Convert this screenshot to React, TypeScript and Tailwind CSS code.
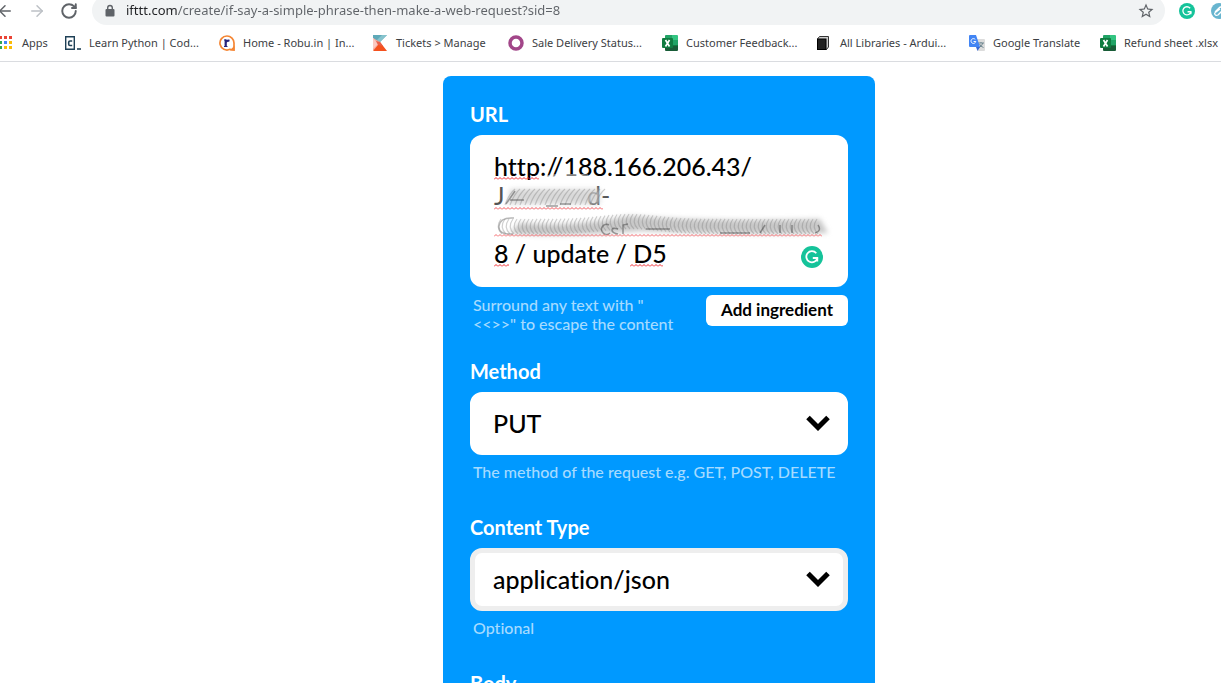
import { ReactNode } from "react";
import { ArrowLeft, ArrowRight, RotateCw } from "lucide-react";

function GrammarlyIcon({ className }: { className: string }) {
  return (
    <svg viewBox="0 0 22 22" className={className} aria-hidden="true">
      <circle cx="11" cy="11" r="11" fill="#15c39a" />
      <path d="M15.3 7.2A5.6 5.6 0 1 0 16.4 12" fill="none" stroke="#fff" strokeWidth="1.8" />
      <path d="M11.8 12h4.5v3.6" fill="none" stroke="#fff" strokeWidth="1.8" />
    </svg>
  );
}

function LockIcon() {
  return (
    <svg viewBox="0 0 12 14" className="h-3.5 w-3 shrink-0" aria-hidden="true">
      <rect x="1.500" y="5" width="9" height="7.500" rx="1" fill="#5f6368" />
      <path d="M3.700 6V3.800a2.300 2.300 0 0 1 4.600 0V6" fill="none" stroke="#5f6368" strokeWidth="1.400" />
    </svg>
  );
}

function StarIcon() {
  return (
    <svg viewBox="0 0 24 24" className="size-[18px]" aria-hidden="true">
      <path
        d="M22 9.240l-7.190-.62L12 2 9.190 8.630 2 9.240l5.460 4.730L5.820 21 12 17.270 18.180 21l-1.630-7.030L22 9.240zM12 15.400l-3.760 2.270 1-4.280-3.320-2.880 4.380-.38L12 6.100l1.710 4.040 4.380.38-3.320 2.880 1 4.280L12 15.400z"
        fill="#5f6368"
      />
    </svg>
  );
}

function ExcelIcon() {
  return (
    <svg viewBox="0 0 16 16" className="size-4">
      <path d="M4 0h6v5H3V1q0-1 1-1z" fill="#21a366" />
      <path d="M10 0h5q1 0 1 1v4h-6z" fill="#33c481" />
      <path d="M3 5h7v6H3z" fill="#107c41" />
      <path d="M10 5h6v5h-6z" fill="#21a366" />
      <path d="M3 10h13v5q0 1-1 1H4q-1 0-1-1z" fill="#185c37" />
      <path d="M10 10h6v1h-6z" fill="#107c41" />
      <rect y="3" width="11" height="10" rx="1" fill="#107c41" />
      <path d="M3.500 5l4 6.500M7.500 5l-4 6.500" stroke="#fff" strokeWidth="1.700" />
    </svg>
  );
}

function AppsIcon() {
  const colors = ["#ea4335", "#ea4335", "#ea4335", "#34a853", "#4285f4", "#fbbc05", "#34a853", "#fbbc05", "#fbbc05"];
  return (
    <svg viewBox="0 0 14 14" className="h-3.5 w-3.5">
      {colors.map((c, i) => (
        <rect key={i} x={(i % 3) * 5 - 1} y={Math.floor(i / 3) * 5} width="3" height="3" fill={c} />
      ))}
    </svg>
  );
}

function CodecademyIcon() {
  return (
    <svg viewBox="0 0 16 16" className="size-4">
      <path d="M.700 1.700h8.600v12.600H.700z" fill="#fff" stroke="#1f4056" strokeWidth="1.400" />
      <path d="M7.200 6H5Q3.700 6 3.700 7.300v1.900q0 1.300 1.300 1.300h2.200" fill="none" stroke="#1f4056" strokeWidth="1.600" />
      <path d="M12 14h4" stroke="#1f4056" strokeWidth="1.600" />
    </svg>
  );
}

function RobuIcon() {
  return (
    <svg viewBox="0 0 16 16" className="size-4">
      <path d="M8 1a7 7 0 1 0 3 13.300L15 15V8A7 7 0 0 0 8 1z" fill="#fff" stroke="#f58634" strokeWidth="1.700" />
      <path d="M11 15.500l4.500-5v5z" fill="#f58634" />
      <path d="M6.700 4.500V12M6.700 7.500q.8-2.500 3.800-1.700" fill="none" stroke="#27247b" strokeWidth="2.200" />
      <path d="M5 5h2M5 11.500h3.500" stroke="#27247b" strokeWidth="1" />
    </svg>
  );
}

function TicketsIcon() {
  return (
    <svg viewBox="0 0 16 16" className="size-4">
      <path d="M1 0h14L7 8 1 3z" fill="#5fa9b8" />
      <path d="M10 0h5L8 7 5 5z" fill="#86c3cd" />
      <path d="M1 3l7 4-3 8H1z" fill="#f7a79c" />
      <path d="M8 7l7 9H1l5-6z" fill="#f4511e" />
      <path d="M1 3l5 6-5 5z" fill="#fbc9c1" />
      <path d="M4 6l4 1 3 4-5-1z" fill="#e8604a" />
    </svg>
  );
}

function RingIcon() {
  return (
    <svg viewBox="0 0 16 16" className="size-4">
      <circle cx="8" cy="8" r="6" fill="none" stroke="#a24689" strokeWidth="3.500" />
    </svg>
  );
}

function BookIcon() {
  return (
    <svg viewBox="0 0 16 16" className="size-4">
      <path d="M1.500 4l2-2.500h9V12l-2 2.500z" fill="#ccc" stroke="#333" />
      <rect x="1.500" y="4" width="8.500" height="10.500" fill="#222" stroke="#000" />
    </svg>
  );
}

function TranslateIcon() {
  return (
    <svg viewBox="0 0 16 16" className="size-4">
      <path d="M7 4h8q1 0 1 1v10q0 1-1 1H9z" fill="#dcdcdc" />
      <path d="M9 8h6M12 7v1M13.800 8q-.8 3-3.500 4.500M10.500 9q1 2.500 4 3.500" fill="none" stroke="#6f8791" />
      <path d="M1 0h6l4 12H1q-1 0-1-1V1q0-1 1-1z" fill="#4285f4" />
      <path d="M7 12h4l-2.500 4z" fill="#3367d6" />
      <path d="M6.300 4.500A2.400 2.400 0 1 0 6.800 6.500H4.600" fill="none" stroke="#fff" />
    </svg>
  );
}

interface BookmarkProps {
  icon: ReactNode;
  label: string;
  width: string;
}

const bookmarks: BookmarkProps[] = [
  { icon: <CodecademyIcon />, label: "Learn Python | Cod...", width: "w-[154px]" },
  { icon: <RobuIcon />, label: "Home - Robu.in | In...", width: "w-[153px]" },
  { icon: <TicketsIcon />, label: "Tickets > Manage", width: "w-[136px]" },
  { icon: <RingIcon />, label: "Sale Delivery Status...", width: "w-[154px]" },
  { icon: <ExcelIcon />, label: "Customer Feedback...", width: "w-[154px]" },
  { icon: <BookIcon />, label: "All Libraries - Ardui...", width: "w-[153px]" },
  { icon: <TranslateIcon />, label: "Google Translate", width: "w-[131px]" },
  { icon: <ExcelIcon />, label: "Refund sheet .xlsx", width: "w-[121px]" },
];

function Bookmark({ icon, label, width }: BookmarkProps) {
  return (
    <a href="#" className={`flex shrink-0 items-center gap-2 whitespace-nowrap ${width}`}>
      {icon}
      {label}
    </a>
  );
}

function BrowserBar() {
  return (
    <header className="shrink-0 overflow-hidden border-b border-[#dadce0] font-['Noto_Sans',sans-serif] text-[#3c4043]">
      <div className="flex h-[25px] items-center">
        <div className="flex w-[92px] shrink-0 items-center gap-3.5 pb-1">
          <button aria-label="Back" className="-ml-1">
            <ArrowLeft className="size-[18px] text-[#5f6368]" />
          </button>
          <button aria-label="Forward">
            <ArrowRight className="size-[18px] text-[#bdc1c6]" />
          </button>
          <button aria-label="Reload">
            <RotateCw className="size-[18px] text-[#5f6368]" strokeWidth={2.6} />
          </button>
        </div>
        <div className="-mt-1 flex h-[29px] flex-1 items-center gap-2.5 rounded-full bg-[#f1f3f4] pr-2.5 pl-3">
          <LockIcon />
          <input
            aria-label="Address"
            defaultValue="ifttt.com/create/if-say-a-simple-phrase-then-make-a-web-request?sid=8"
            className="min-w-0 flex-1 bg-linear-to-r from-[#202124] from-[51px] to-[#5f6368] to-[51px] bg-clip-text text-[13px] text-transparent outline-none"
          />
          <button aria-label="Bookmark this page">
            <StarIcon />
          </button>
        </div>
        <div className="flex w-14 shrink-0 items-center gap-4 overflow-hidden pb-1 pl-3.5">
          <GrammarlyIcon className="size-4 shrink-0" />
          <svg viewBox="0 0 16 16" className="size-4 shrink-0" aria-hidden="true">
            <circle cx="8" cy="8" r="8" fill="#68b5cf" />
            <path d="M4 9l4-4q2-2 3.500 0T11 8l-4 4q-2 1-3-.5T5 9l4-3" fill="none" stroke="#fff" strokeWidth="1.300" />
          </svg>
        </div>
      </div>
      <nav className="flex h-9 items-center text-[11px]">
        <a href="#" className="flex w-[65px] shrink-0 items-center gap-2">
          <AppsIcon />
          Apps
        </a>
        {bookmarks.map((b) => (
          <Bookmark key={b.label} {...b} />
        ))}
      </nav>
    </header>
  );
}

const shortStreaks = Array.from({ length: 19 }, (_, i) => 38 + i * 5);
const longStreaks = Array.from({ length: 80 }, (_, i) => 31 + i * 4);

// The long smear rises a little in the middle of the line
function smearTop(x: number) {
  return 84 - 5 * Math.exp(-(((x - 160) / 40) ** 2));
}

// Spell-check underlines and the smeared token inside the URL box
function UrlMarks() {
  return (
    <svg viewBox="0 0 378 152" className="pointer-events-none absolute top-0 left-0 h-[152px] w-[378px]" aria-hidden="true">
      <defs>
        <pattern id="squiggle" width="4" height="3" patternUnits="userSpaceOnUse">
          <path d="M0 2.500L2 .5L4 2.500" fill="none" stroke="#f0272d" strokeWidth="1" />
        </pattern>
        <filter id="soft" x="-10%" y="-50%" width="120%" height="200%">
          <feGaussianBlur stdDeviation=".6" />
        </filter>
        <filter id="softer" x="-10%" y="-50%" width="120%" height="200%">
          <feGaussianBlur stdDeviation="2.500" />
        </filter>
      </defs>
      <path d="M68 44Q95 39 118 42" stroke="#fff" strokeOpacity=".5" strokeWidth="5" fill="none" filter="url(#soft)" />
      <g fill="#555" fontSize="25">
        <text x="24" y="70">J</text>
        <text x="117" y="70">d-</text>
      </g>
      <path d="M40 54h90v15H38z" fill="#d0d0d0" fillOpacity=".8" filter="url(#softer)" />
      <path d="M50 88Q100 93 160 81Q240 87 350 84l8 14Q280 100 170 96Q80 103 40 98Z" fill="#c8c8c8" filter="url(#softer)" />
      <g fill="none" stroke="#777" strokeOpacity=".35" strokeWidth="1.200" filter="url(#soft)">
        {shortStreaks.map((x) => (
          <path key={x} d={`M${x + 7} 54Q${x + 1} 59 ${x - 3} 70`} />
        ))}
        {longStreaks.map((x) => (
          <path key={x} d={`M${x} ${smearTop(x)}q-6 8 1 15`} />
        ))}
      </g>
      <path d="M44 83q-14-1-15 8t14 8" fill="none" stroke="#888" strokeWidth="1.500" opacity=".6" filter="url(#soft)" />
      <g fill="none" stroke="#444" strokeOpacity=".5" strokeWidth="1.500" filter="url(#soft)">
        <path d="M36 69l9-13M40 65h14M76 71h12M90 69h11" />
        <path d="M139 90a5 5 0 1 0 1 8M148 94q-6-2-6 1t6 4M153 99V90l5-1M176 94h24M250 98h30M290 98l5-8M310 98V90M322 98V90M345 98q7-2 3-8" />
      </g>
      <g fill="url(#squiggle)">
        <path d="M24 42h45v3H24z" />
        <path d="M24 72h109v3H24z" opacity=".8" />
        <path d="M24 99h328v3H24z" opacity=".7" />
        <path d="M24 129h15v3H24z" />
        <path d="M160 129h33v3h-33z" />
      </g>
    </svg>
  );
}

interface SelectFieldProps {
  id: string;
  label: string;
  value: string;
  hint: string;
  outlined?: boolean;
}

function SelectField({ id, label, value, hint, outlined = false }: SelectFieldProps) {
  return (
    <div className="mb-[34px]">
      <label htmlFor={id} className="block text-[20px] leading-6 font-bold text-white">
        {label}
      </label>
      <div className="relative mt-[9px]">
        <select
          id={id}
          defaultValue={value}
          className={`block h-[63px] w-full appearance-none rounded-xl border-[5px] bg-white px-[18px] text-[25px] font-medium text-black outline-none ${outlined ? "border-[#eee]" : "border-white"}`}
        >
          <option>{value}</option>
        </select>
        <svg viewBox="0 0 24 16" className="pointer-events-none absolute top-[23px] right-[18px] h-4 w-6" aria-hidden="true">
          <path d="M2 2.500L12 12.500L22 2.500" fill="none" stroke="#000" strokeWidth="5" />
        </svg>
      </div>
      <p className="mt-[7px] pl-[3px] text-[16px] leading-[19px] font-medium whitespace-nowrap text-[#a6dbff]">{hint}</p>
    </div>
  );
}

export default function App() {
  return (
    <div className="flex h-screen flex-col overflow-hidden bg-white">
      <BrowserBar />
      <main className="flex flex-1 justify-center overflow-hidden pt-3.5 pl-[97px] font-['Lato',sans-serif] [font-variant-ligatures:none]">
        <form className="h-max w-full max-w-[432px] rounded-lg bg-[#0099ff] px-[27px] pt-[26px] pb-[27px]">
          <label htmlFor="url" className="block text-[20px] leading-6 font-bold text-white">
            URL
          </label>
          <div className="relative mt-[9px]">
            <textarea
              id="url"
              rows={4}
              spellCheck={false}
              defaultValue={"http://188.166.206.43/\n\n\n8 / update / D5"}
              className="block w-full resize-none overflow-hidden rounded-xl bg-white px-6 pt-[17px] pb-[19px] text-[25px] leading-[29px] font-medium text-black outline-none"
            />
            <UrlMarks />
            <GrammarlyIcon className="absolute right-[25px] bottom-[19px] size-[22px]" />
          </div>
          <div className="mt-2 mb-[26px] flex items-start justify-between">
            <p className="pl-[3px] text-[16px] leading-[19px] font-medium text-[#a6dbff]">
              Surround any text with "<br />
              {'<<>>" to escape the content'}
            </p>
            <button type="button" className="h-[31px] w-[142px] rounded-md bg-white pb-0.5 text-[17px] font-bold text-black">
              Add ingredient
            </button>
          </div>
          <SelectField id="method" label="Method" value="PUT" hint="The method of the request e.g. GET, POST, DELETE" />
          <SelectField id="content-type" label="Content Type" value="application/json" hint="Optional" outlined />
          <label htmlFor="body" className="block text-[20px] leading-6 font-bold text-white">
            Body
          </label>
          <textarea id="body" rows={4} className="mt-[9px] block w-full resize-none rounded-xl bg-white px-6 pt-[17px] pb-[19px] text-[25px] leading-[29px]" />
        </form>
      </main>
    </div>
  );
}
